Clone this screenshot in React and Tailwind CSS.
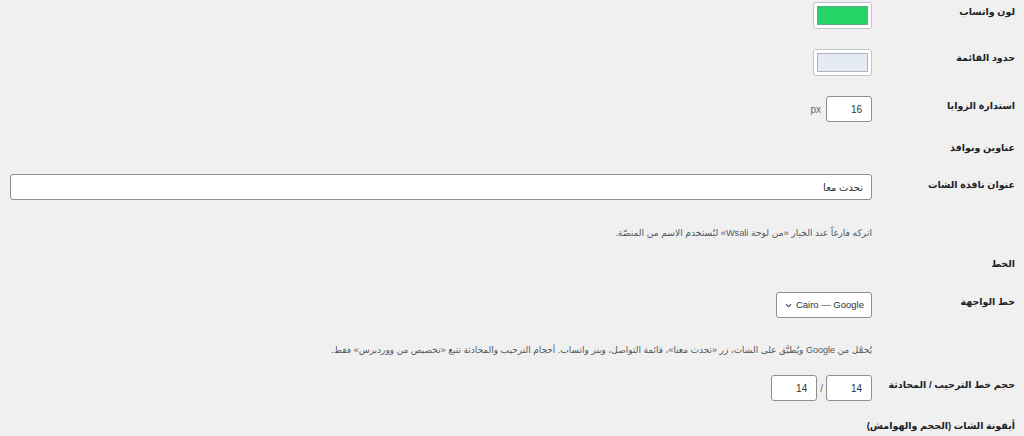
import React from 'react';

const font = { fontFamily: '"Liberation Sans", "DejaVu Sans", sans-serif' };

function Label({ children }) {
  return (
    <div className="w-[143px] shrink-0 text-right text-[9.5px] font-bold text-[#1d2327] leading-[16px] whitespace-nowrap">
      {children}
    </div>
  );
}

function Swatch({ color }) {
  return (
    <div className="w-[59px] h-[27px] bg-white border border-[#c3c4c7] rounded-[3px] p-[3px]">
      <div className="w-full h-full border border-[#8c8f94]/60" style={{ background: color }} />
    </div>
  );
}

function NumInput({ value }) {
  return (
    <input
      readOnly
      value={value}
      className="w-[46px] h-[26px] bg-white border border-[#8c8f94] rounded-[3px] px-[9px] text-[10px] text-[#2c3338] text-right outline-none"
    />
  );
}

export default function App() {
  return (
    <div dir="rtl" style={font} className="min-h-[436px] bg-[#f0f0f1] pr-[9px] pl-[10px] text-[#1d2327] overflow-hidden">
      {/* colours */}
      <div className="flex items-start pt-[2px] h-[29px]">
        <Label><div className="pt-[2px]">لون واتساب</div></Label>
        <Swatch color="#25d366" />
      </div>
      <div className="flex items-start mt-[20px] h-[27px]">
        <Label><div className="pt-[1px]">حدود القائمة</div></Label>
        <Swatch color="#e5ebf3" />
      </div>
      <div className="flex items-start mt-[20px] h-[26px]">
        <Label><div className="pt-[2px]">استدارة الزوايا</div></Label>
        <div className="flex items-center gap-[5px]">
          <NumInput value="16" />
          <span className="text-[10px] text-[#646970]">px</span>
        </div>
      </div>

      <h3 className="mt-[18px] text-[9.5px] font-bold leading-[16px] h-[16px]">عناوين ونوافذ</h3>

      <div className="flex items-start mt-[18px] h-[26px]">
        <Label><div className="pt-[3px]">عنوان نافذة الشات</div></Label>
        <input
          readOnly
          value="تحدث معا"
          className="flex-1 h-[26px] bg-white border border-[#8c8f94] rounded-[3px] px-[8px] text-[10px] text-[#2c3338] text-right outline-none"
        />
      </div>
      <p className="mr-[143px] mt-[25px] text-[9.2px] leading-[16px] text-[#50575e]">
        اتركه فارغاً عند الخيار «من لوحة Wsali» ليُستخدم الاسم من المنصّة.
      </p>

      <h3 className="mt-[15px] text-[9.5px] font-bold leading-[16px]">الخط</h3>

      <div className="flex items-start mt-[20px] h-[26px]">
        <Label><div className="pt-[2px]">خط الواجهة</div></Label>
        <div className="w-[96px] h-[26px] bg-white border border-[#8c8f94] rounded-[3px] flex items-center justify-between pr-[7px] pl-[8px] text-[9.5px] text-[#2c3338] whitespace-nowrap">
          <span dir="ltr">Cairo — Google</span>
          <svg width="7" height="5" viewBox="0 0 8 6" fill="none" stroke="#50575e" strokeWidth="1.3">
            <path d="M1 1.5 4 4.5 7 1.5" />
          </svg>
        </div>
      </div>
      <p className="mr-[143px] mt-[24px] text-[9px] leading-[16px] text-[#50575e]">
        يُحمَّل من Google ويُطبَّق على الشات، زر «تحدث معنا»، قائمة التواصل، وبنر واتساب. أحجام الترحيب والمحادثة تتبع «تخصيص من ووردبرس» فقط.
      </p>

      <div className="flex items-start mt-[17px] h-[26px]">
        <Label><div className="pt-[2px]">حجم خط الترحيب / المحادثة</div></Label>
        <div className="flex items-center gap-[2px]">
          <NumInput value="14" />
          <span className="text-[10px] text-[#646970] px-[1px]">/</span>
          <NumInput value="14" />
        </div>
      </div>

      <h3 className="mt-[17px] text-[9.5px] font-bold leading-[16px]">أيقونة الشات (الحجم والهوامش)</h3>
    </div>
  );
}
